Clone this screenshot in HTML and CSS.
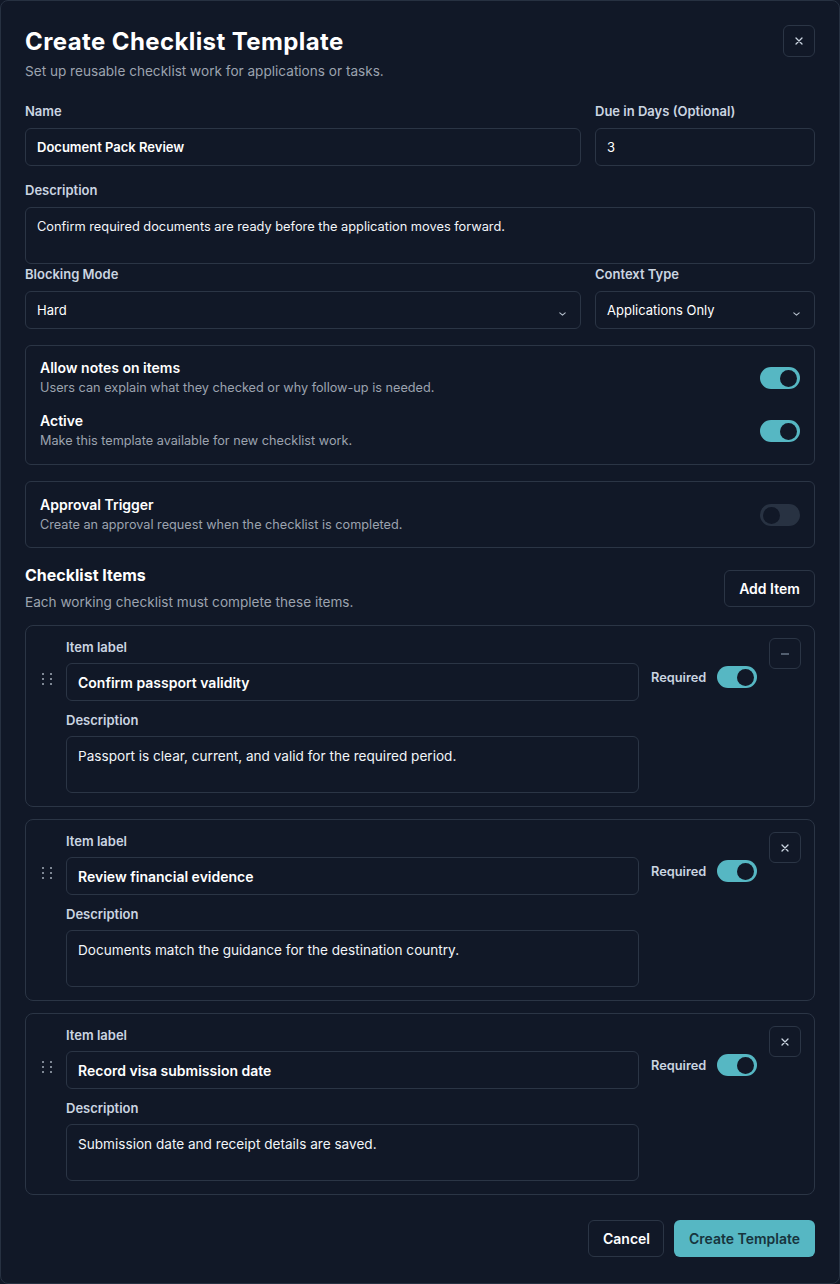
FILE: index.html
```html
<!DOCTYPE html>
<html lang="en">
<head>
<meta charset="utf-8">
<title>Create Checklist Template</title>
<link rel="stylesheet" href="styles.css">
</head>
<body>
<div class="modal">
  <div class="header">
    <div>
      <h1 class="title">Create Checklist Template</h1>
      <p class="subtitle">Set up reusable checklist work for applications or tasks.</p>
    </div>
    <button class="icon-btn close-btn" aria-label="Close">
      <svg width="8" height="8" viewBox="0 0 8 8"><path d="M1 1L7 7M7 1L1 7" stroke="#cbd5e1" stroke-width="1.3" stroke-linecap="round"/></svg>
    </button>
  </div>

  <div class="row row-name">
    <div class="field grow">
      <label class="label">Name</label>
      <div class="input strong">Document Pack Review</div>
    </div>
    <div class="field side">
      <label class="label">Due in Days (Optional)</label>
      <div class="input">3</div>
    </div>
  </div>

  <div class="field desc-field">
    <label class="label">Description</label>
    <div class="textarea">Confirm required documents are ready before the application moves forward.</div>
  </div>

  <div class="row row-select">
    <div class="field grow">
      <label class="label">Blocking Mode</label>
      <div class="input select">Hard
        <svg class="chev" width="7" height="4" viewBox="0 0 7 4"><path d="M0.8 0.8L3.5 3.2L6.2 0.8" stroke="#b6c0cc" stroke-width="1.1" fill="none" stroke-linecap="round" stroke-linejoin="round"/></svg>
      </div>
    </div>
    <div class="field side">
      <label class="label">Context Type</label>
      <div class="input select">Applications Only
        <svg class="chev" width="7" height="4" viewBox="0 0 7 4"><path d="M0.8 0.8L3.5 3.2L6.2 0.8" stroke="#b6c0cc" stroke-width="1.1" fill="none" stroke-linecap="round" stroke-linejoin="round"/></svg>
      </div>
    </div>
  </div>

  <div class="panel">
    <div class="setting">
      <div>
        <div class="setting-title">Allow notes on items</div>
        <div class="setting-sub">Users can explain what they checked or why follow-up is needed.</div>
      </div>
      <span class="toggle on"><span class="knob"></span></span>
    </div>
    <div class="setting">
      <div>
        <div class="setting-title">Active</div>
        <div class="setting-sub">Make this template available for new checklist work.</div>
      </div>
      <span class="toggle on"><span class="knob"></span></span>
    </div>
  </div>

  <div class="panel panel-approval">
    <div class="setting">
      <div>
        <div class="setting-title">Approval Trigger</div>
        <div class="setting-sub">Create an approval request when the checklist is completed.</div>
      </div>
      <span class="toggle"><span class="knob"></span></span>
    </div>
  </div>

  <div class="items-head">
    <div>
      <h2 class="items-title">Checklist Items</h2>
      <p class="items-sub">Each working checklist must complete these items.</p>
    </div>
    <button class="btn btn-outline add-btn">Add Item</button>
  </div>

  <div class="items">
    <div class="item">
      <div class="handle"><i></i><i></i><i></i><i></i><i></i><i></i></div>
      <div class="item-fields">
        <label class="label item-label">Item label</label>
        <div class="input item-input strong">Confirm passport validity</div>
        <label class="label item-label item-desc-label">Description</label>
        <div class="textarea item-textarea">Passport is clear, current, and valid for the required period.</div>
      </div>
      <div class="required">
        <span class="req-label">Required</span>
        <span class="toggle on"><span class="knob"></span></span>
      </div>
      <button class="icon-btn remove-btn" aria-label="Remove">
        <svg width="8" height="2" viewBox="0 0 8 2"><path d="M0.5 1H7.5" stroke="#94a3b8" stroke-width="1.2" stroke-linecap="round"/></svg>
      </button>
    </div>

    <div class="item">
      <div class="handle"><i></i><i></i><i></i><i></i><i></i><i></i></div>
      <div class="item-fields">
        <label class="label item-label">Item label</label>
        <div class="input item-input strong">Review financial evidence</div>
        <label class="label item-label item-desc-label">Description</label>
        <div class="textarea item-textarea">Documents match the guidance for the destination country.</div>
      </div>
      <div class="required">
        <span class="req-label">Required</span>
        <span class="toggle on"><span class="knob"></span></span>
      </div>
      <button class="icon-btn remove-btn" aria-label="Remove">
        <svg width="8" height="8" viewBox="0 0 8 8"><path d="M1 1L7 7M7 1L1 7" stroke="#cbd5e1" stroke-width="1.3" stroke-linecap="round"/></svg>
      </button>
    </div>

    <div class="item">
      <div class="handle"><i></i><i></i><i></i><i></i><i></i><i></i></div>
      <div class="item-fields">
        <label class="label item-label">Item label</label>
        <div class="input item-input strong">Record visa submission date</div>
        <label class="label item-label item-desc-label">Description</label>
        <div class="textarea item-textarea">Submission date and receipt details are saved.</div>
      </div>
      <div class="required">
        <span class="req-label">Required</span>
        <span class="toggle on"><span class="knob"></span></span>
      </div>
      <button class="icon-btn remove-btn" aria-label="Remove">
        <svg width="8" height="8" viewBox="0 0 8 8"><path d="M1 1L7 7M7 1L1 7" stroke="#cbd5e1" stroke-width="1.3" stroke-linecap="round"/></svg>
      </button>
    </div>
  </div>

  <div class="footer">
    <button class="btn btn-outline cancel-btn">Cancel</button>
    <button class="btn btn-primary">Create Template</button>
  </div>
</div>
</body>
</html>
```

FILE: styles.css
```css
* { box-sizing: border-box; }

html, body {
  margin: 0;
  padding: 0;
  background: #111827;
}

body {
  font-family: Inter, "Noto Sans", "Liberation Sans", sans-serif;
  color: #f8fafc;
}

.modal {
  width: 840px;
  height: 1284px;
  border: 1px solid #273141;
  border-radius: 8px;
  background: #111827;
  padding: 24px;
  display: flex;
  flex-direction: column;
}

.header {
  display: flex;
  justify-content: space-between;
  align-items: flex-start;
}

.title {
  margin: 1px 0 0;
  font-size: 24px;
  line-height: 32px;
  font-weight: 700;
  color: #ffffff;
  letter-spacing: 0.4px;
}

.subtitle {
  margin: 3px 0 0;
  font-size: 13.6px;
  line-height: 20px;
  color: #9ca3af;
}

.icon-btn {
  width: 32px;
  height: 32px;
  border: 1px solid #2b3545;
  border-radius: 6px;
  background: #111827;
  display: flex;
  align-items: center;
  justify-content: center;
  padding: 0;
  flex: none;
}

.row {
  display: flex;
  gap: 14px;
}

.row-name { margin-top: 21px; }
.row-select { margin-top: 1px; }

.field { display: flex; flex-direction: column; }
.grow { flex: 1; }
.side { width: 220px; flex: none; }

.desc-field { margin-top: 15px; }

.label {
  font-size: 13px;
  line-height: 18px;
  font-weight: 600;
  color: #cbd5e1;
  margin-bottom: 8px;
}

.input {
  height: 38px;
  border: 1px solid #2b3545;
  border-radius: 6px;
  background: #111827;
  padding: 0 11px;
  display: flex;
  align-items: center;
  font-size: 13px;
  color: #ffffff;
}

.strong { font-weight: 600; }

.select {
  justify-content: space-between;
}

.chev { margin-top: 8px; margin-right: 3px; }

.textarea {
  height: 57px;
  border: 1px solid #2b3545;
  border-radius: 6px;
  background: #111827;
  padding: 10px 11px;
  font-size: 12.8px;
  line-height: 18px;
  color: #f1f5f9;
}

.panel {
  margin-top: 16px;
  border: 1px solid #2b3545;
  border-radius: 6px;
  padding: 12px 14px 13px;
  display: flex;
  flex-direction: column;
  gap: 13px;
}

.setting {
  display: flex;
  justify-content: space-between;
  align-items: center;
}

.setting-title {
  font-size: 14px;
  line-height: 20px;
  font-weight: 600;
  color: #ffffff;
}

.setting-sub {
  font-size: 12.7px;
  line-height: 20px;
  color: #9ca3af;
}

.panel-approval { padding-top: 13px; padding-bottom: 12px; }

.toggle {
  width: 40px;
  height: 22px;
  border-radius: 11px;
  background: #283242;
  display: flex;
  align-items: center;
  padding: 0 3px;
  flex: none;
}

.toggle .knob {
  width: 17px;
  height: 17px;
  border-radius: 50%;
  background: #111827;
}

.toggle.on {
  background: #56b7c3;
  justify-content: flex-end;
}

.items-head {
  margin-top: 15px;
  display: flex;
  justify-content: space-between;
  align-items: flex-start;
}

.items-title {
  margin: 0;
  font-size: 16px;
  line-height: 24px;
  font-weight: 700;
  color: #ffffff;
}

.items-sub {
  margin: 5px 0 0;
  font-size: 13.6px;
  line-height: 20px;
  color: #9ca3af;
}

.btn {
  height: 37px;
  border-radius: 6px;
  font-family: inherit;
  font-size: 14px;
  font-weight: 600;
  padding: 0 14px;
}

.btn-outline {
  border: 1px solid #2b3545;
  background: #111827;
  color: #ffffff;
}

.add-btn { margin-top: 7px; width: 91px; }

.items {
  margin-top: 13px;
  display: flex;
  flex-direction: column;
  gap: 12px;
}

.item {
  border: 1px solid #2b3545;
  border-radius: 8px;
  padding: 12px 13px 13px 14px;
  display: flex;
  align-items: flex-start;
}

.handle {
  width: 14px;
  margin-top: 35px;
  margin-right: 12px;
  display: grid;
  grid-template-columns: 2px 2px;
  column-gap: 6px;
  row-gap: 3px;
  padding-left: 2px;
}

.handle i {
  display: block;
  width: 2px;
  height: 2px;
  border-radius: 1px;
  background: #a3adba;
}

.item-fields {
  flex: 1;
  display: flex;
  flex-direction: column;
}

.item-label { margin-bottom: 7px; }

.item-input {
  height: 38px;
  font-size: 14px;
}

.item-desc-label { margin-top: 10px; }

.item-textarea {
  font-size: 13.6px;
  line-height: 20px;
  padding: 9px 11px;
}

.required {
  width: 106px;
  flex: none;
  margin-left: 12px;
  margin-top: 28px;
  display: flex;
  align-items: center;
  justify-content: space-between;
}

.req-label {
  font-size: 12.8px;
  font-weight: 600;
  color: #cbd5e1;
}

.remove-btn {
  margin-left: 12px;
  width: 32px;
  height: 31px;
}

.footer {
  margin-top: 25px;
  display: flex;
  justify-content: flex-end;
  gap: 10px;
}

.cancel-btn { width: 76px; }

.btn-primary {
  border: none;
  background: #56b7c3;
  color: #17343d;
  width: 141px;
}
```
